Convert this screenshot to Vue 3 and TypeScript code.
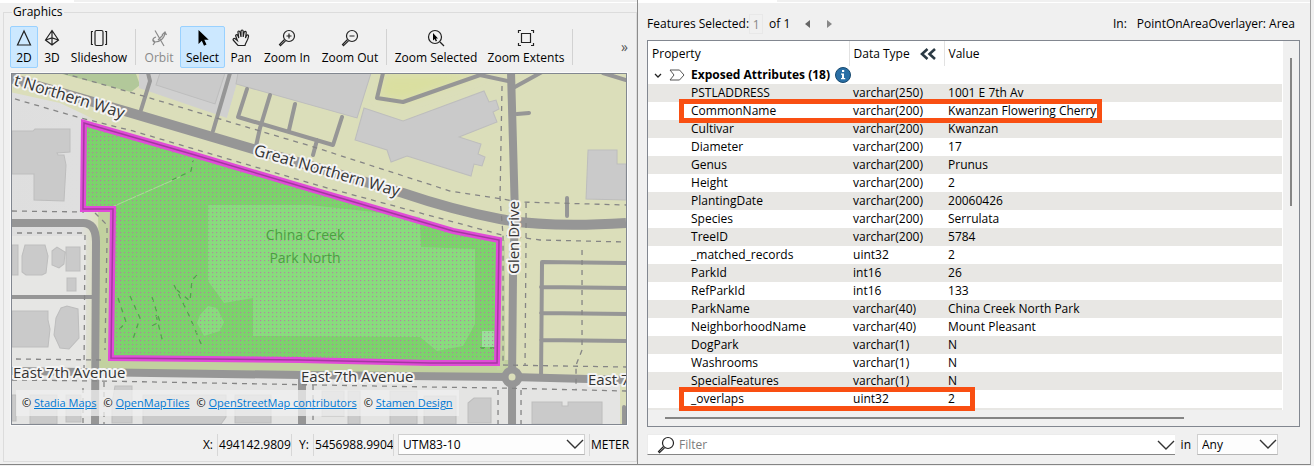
<script setup lang="ts">
import { ref } from 'vue'

interface Attribute {
  name: string
  type: string
  value: string
  mark?: string
}

const attributes: Attribute[] = [
  { name: 'PSTLADDRESS', type: 'varchar(250)', value: '1001 E 7th Av' },
  { name: 'CommonName', type: 'varchar(200)', value: 'Kwanzan Flowering Cherry', mark: 'wide' },
  { name: 'Cultivar', type: 'varchar(200)', value: 'Kwanzan' },
  { name: 'Diameter', type: 'varchar(200)', value: '17' },
  { name: 'Genus', type: 'varchar(200)', value: 'Prunus' },
  { name: 'Height', type: 'varchar(200)', value: '2' },
  { name: 'PlantingDate', type: 'varchar(200)', value: '20060426' },
  { name: 'Species', type: 'varchar(200)', value: 'Serrulata' },
  { name: 'TreeID', type: 'varchar(200)', value: '5784' },
  { name: '_matched_records', type: 'uint32', value: '2' },
  { name: 'ParkId', type: 'int16', value: '26' },
  { name: 'RefParkId', type: 'int16', value: '133' },
  { name: 'ParkName', type: 'varchar(40)', value: 'China Creek North Park' },
  { name: 'NeighborhoodName', type: 'varchar(40)', value: 'Mount Pleasant' },
  { name: 'DogPark', type: 'varchar(1)', value: 'N' },
  { name: 'Washrooms', type: 'varchar(1)', value: 'N' },
  { name: 'SpecialFeatures', type: 'varchar(1)', value: 'N' },
  { name: '_overlaps', type: 'uint32', value: '2', mark: 'narrow' },
]

const mode = ref('2D')
const tool = ref('Select')
const filter = ref('')
const page = ref('1')
</script>

<template>
  <main class="app">
    <section class="pane graphics">
      <div class="strip"><span class="tab tab-left"></span></div>
      <fieldset class="group">
        <legend>Graphics</legend>
        <div class="toolbar" role="toolbar" aria-label="Graphics">
          <button class="tool w28" :class="{ on: mode === '2D' }" @click="mode = '2D'">
            <svg viewBox="0 0 18 18"><path d="M9 2 2.500 16h13z" /></svg>2D
          </button>
          <button class="tool w28" :class="{ on: mode === '3D' }" @click="mode = '3D'">
            <svg viewBox="0 0 18 18"><path d="M9 1.500 2.500 11 9 16l6.500-5zM9 1.500V16M2.500 11 9 9l6.500 2" /></svg>3D
          </button>
          <button class="tool w66">
            <svg viewBox="0 0 18 18"><rect x="5" y="1.500" width="8" height="15" rx="1.500" /><path d="M3 2.500H1.500v13H3M15 2.500h1.500v13H15" /></svg>Slideshow
          </button>
          <i class="sep"></i>
          <button class="tool w42" disabled>
            <svg viewBox="0 0 18 18"><path d="M5 1.500 14 17M15 3C15 9 10 13 5 13 2 13 2 9 6 8M2.500 10.500 5 13l-2 3M12 6l3-3 1.500 3M8 11l5-5" /></svg>Orbit
          </button>
          <button class="tool w45" :class="{ on: tool === 'Select' }" @click="tool = 'Select'">
            <svg viewBox="0 0 18 18"><path d="M4.500 1v14l3.300-3.300 2.200 5 2.500-1.200-2.200-4.700h4.400z" fill="#000" stroke="none" /></svg>Select
          </button>
          <button class="tool w32" :class="{ on: tool === 'Pan' }" @click="tool = 'Pan'">
            <svg viewBox="0 0 18 18"><path d="M6 16.500h7c.5-3 3-5 3.500-9 .2-2-1.700-2-2.200-.4L13.500 9l.7-5c.2-2-1.800-2.200-2.200-.3l-.8 4.300V2.500c0-2-2.200-2-2.200 0V8L8 3.200c-.4-1.800-2.400-1.500-2 .5L6.800 9l-1-2.500c-.7-1.500-2.600-.8-2 .8l1.500 4.200-2.100-1.700c-1.500-1-2.800.4-1.600 1.700z" /></svg>Pan
          </button>
          <button class="tool w60">
            <svg viewBox="0 0 18 18"><circle cx="11" cy="7" r="5.500" /><path d="M6.500 10.500 1.500 15.500l1 1.200 5-4.800M8.500 7h5M11 4.500v5" /></svg>Zoom In
          </button>
          <button class="tool w66">
            <svg viewBox="0 0 18 18"><circle cx="11" cy="7" r="5.500" /><path d="M6.500 10.500 1.500 15.500l1 1.200 5-4.800M8.500 7h5" /></svg>Zoom Out
          </button>
          <i class="sep"></i>
          <button class="tool w94">
            <svg viewBox="0 0 18 18"><circle cx="8" cy="8" r="6.500" /><path d="m13 13 4 4" /><path d="M6 4v7.500l1.700-1.500 1.100 2.400 1.200-.6L8.900 9.500H11z" fill="#111" stroke="none" /></svg>Zoom Selected
          </button>
          <button class="tool w86">
            <svg viewBox="0 0 18 18"><path d="M4.500 4.500h9v9h-9zM1.500 4V1.500H4M14 1.500h2.500V4M16.500 14v2.500H14M4 16.500H1.500V14" /></svg>Zoom Extents
          </button>
          <i class="sep"></i>
          <button class="more" aria-label="More tools">»</button>
        </div>

        <div class="map-frame">
          <svg class="map" viewBox="12 74 614 350" preserveAspectRatio="xMidYMid slice" role="img" aria-label="Map of China Creek Park North">
            <defs>
              <pattern id="dots" width="4" height="4" patternUnits="userSpaceOnUse"><rect width="1" height="1" fill="#b878a4" /></pattern>
              <linearGradient id="fade" x1="0" x2="1"><stop offset="0" stop-color="#dedede" /><stop offset=".8" stop-color="#dfdfdf" /><stop offset="1" stop-color="#dcdfba" /></linearGradient>
              <filter id="soft" x="-20%" y="-20%" width="140%" height="140%"><feGaussianBlur stdDeviation="5" /></filter>
            </defs>
            <rect x="12" y="74" width="614" height="350" fill="#dbdeba" />
            <path d="M0 90 60 103 100 122 97 376H0z" fill="url(#fade)" />
            <path d="M0 372 620 382V424H0z" fill="#e4e4e3" />
            <path d="M12 236h74v134H12z" fill="#e6e6e4" />
            <path d="M62 74h74l4 11-9 7z" fill="#b2c89a" />
            <path d="M98 205h16v155h400v13H100z" fill="#c2d19f" />
            <path d="M497 240h8v130h-8z" fill="#c5d3a4" />
            <path d="M384 74 379 97l24 4 78-27z" fill="#dadfa0" filter="url(#soft)" />
            <path d="M139 73v15l88 30 10-35 120 35 14-45z" fill="#d0d0d0" />
            <path d="M237 84 227 118 238 120 252 125 350 150 358 119z" fill="#dbdeba" />
            <g class="building">
              <path d="M160 73 156 85l59 19 10-31zM238 73l-2 11 121 34 14-45z" />
              <path d="M364 108 403 121 484 91l5 11 7-2 3 9-6 3 4 10-38 15 22 7-3 10 7 3-3 9-8-2-3 12-64-20-16 6-4-12-32-10z" />
              <path d="M588 150h29v14h9v36l-40-1z" />
              <path d="M12 131h21l2-2h35v23l-13 1 1 2h6l2 10-2 36-30-1v-26H12z" />
              <path d="M12 245h6v30h-6zM25 245h20l3 11-2 17-4 2H26l-4-3V256zM52 251l5-4 8 5-1 12-5 4-7-3zM66 247h14v24H66zM67 278h9v13h-9z" />
              <path d="M12 311h36v9l2 9-2 18H12zM56 318l5-10 6-2 11 3 1 29-10 11-9-1-6-13z" />
              <path d="M12 395h4v26h-4zM30 395h27v29H30zM66 395h15v27H66zM115 386h17v37h-20v-20zM143 395h83v22l-5 7h-78zM235 395h36v28h-36zM322 391h22v25h-22zM348 391h12v33h-12zM390 391h27v33h-27zM424 396h32v28h-32zM468 403l6-5h17v25h-23zM532 402h30v4h6v-4h34v22h-70z" />
            </g>
            <g class="road thin">
              <path d="M148 73l2 8-9 29M230 73l-17 58M247 89l-9 28 95 28 9-28M270 95l-10 33-4 18M295 104l-6 26M317 140l-4 15" />
              <path d="M383 73l-6 25 26 4 77-27 32 7M542 72l-29 16M517 114l12-1M567 198v18M603 73l23 7" />
              <path d="M626 263l-84-1-1 115M541 287l85 1M541 313l85 1M541 340l85 1M12 297h80M624 407v17" />
            </g>
            <g class="road">
              <path class="wide" d="M0 75 128 112 253 149 403 193Q453 210 500 219T626 223" />
              <path d="M511 73 515 216 513 273 512 377V424M12 223h71q13 0 13 19l-1 182M12 371l288 4 212 2 114 3M302 377v47" />
            </g>
            <circle cx="512" cy="377" r="7" fill="#dbdeba" stroke="#969696" stroke-width="7" />
            <g class="path">
              <path d="M63 73 143 96 233 123 307 145 323 150 450 191 502 199 520 202 626 205M15 99l62 18 56 14 187 55 182 49 38 5 86 2" />
              <path d="M502 86 500 198l3 37v130M526 203v37l-1 125M498 390v34M521 390v34M582 250v100l-6 15v25" />
              <path d="M503 365l123 2M12 380l88 1 330 6 70 1 126 3M12 211l72 1M17 233h68l-1 140M16 359l87 1M95 213l12 12v15l-2 110M104 382v42M83 388v36M313 385v39" />
            </g>
            <path class="park" d="M84 123 195 155 320 192 453 231 499 240 497 363 430 363 300 360 111 358 113 209H83z" />
            <path d="M208 205h102l110 12 1 30 54 2v75l-12 22-26 5-17-14-167-1v-38l-29 5-16-22zM200 315l8-9 9 2 7 14-4 9-16 5-7-13z" fill="#8fe187" opacity=".65" />
            <path d="M482 331h12v16h-12z" fill="#9ae09a" />
            <path d="M112 207l68-30" fill="none" stroke="#a4df91" />
            <path class="trail" d="M172 180l19-9 2-11M118 298l8 24-9 10M130 296l10 22-8 24M152 297l8 25-9 4M156 315l7 28M174 285l14 28 14 33M177 290l13 11 2-21 5-5M480 348h16" />
            <path d="M84 123 195 155 320 192 453 231 499 240 497 363 430 363 300 360 111 358 113 209H83z" fill="url(#dots)" />
            <path d="M84 123 195 155 320 192 453 231 499 240 497 363 430 363 300 360 111 358 113 209H83z" class="edge" />
            <path d="M84 123 195 155 320 192 453 231 499 240 497 363 430 363 300 360 111 358 113 209H83z" class="edge-core" />
            <g class="label">
              <text transform="translate(13 85) rotate(17)">t Northern Way</text>
              <text transform="translate(253 155) rotate(16)">Great Northern Way</text>
              <text class="small" transform="translate(519 274) rotate(-90)">Glen Drive</text>
              <text class="small" x="13" y="378">East 7th Avenue</text>
              <text class="small" x="301" y="382">East 7th Avenue</text>
              <text class="small" x="588" y="385">East 7</text>
            </g>
            <g class="park-label"><text x="305" y="240">China Creek</text><text x="305" y="263">Park North</text></g>
          </svg>
          <div class="credit">
            <span>© <a href="#">Stadia Maps</a></span>
            <span>© <a href="#">OpenMapTiles</a></span>
            <span>© <a href="#">OpenStreetMap contributors</a></span>
            <span>© <a href="#">Stamen Design</a></span>
          </div>
        </div>

        <div class="status">
          <span class="cell">X:</span>
          <span class="cell num-x">494142.9809</span>
          <span class="cell axis">Y:</span>
          <span class="cell num-y">5456988.9904</span>
          <span class="cell system">
            <span class="combo">
              <select aria-label="Coordinate system"><option>UTM83-10</option></select>
              <svg class="chev" viewBox="0 0 18 10"><path d="m1 1 8 8 8-8" /></svg>
            </span>
          </span>
          <span class="cell unit">METER</span>
        </div>
      </fieldset>
    </section>

    <section class="pane info">
      <div class="strip"><span class="tab tab-right"></span></div>
      <header class="selection">
        <label for="page">Features Selected:</label>
        <input id="page" v-model="page" class="page" disabled />
        <span>of 1</span>
        <button class="step" aria-label="Previous"><svg viewBox="0 0 5 8"><path d="M5 0v8L0 4z" fill="#666" /></svg></button>
        <button class="step" aria-label="Next"><svg viewBox="0 0 5 8"><path d="M0 0v8l5-4z" fill="#888" /></svg></button>
        <span class="source"><span>In:</span><span>PointOnAreaOverlayer: Area</span></span>
      </header>

      <div class="grid-box">
        <div class="grid-view">
          <table>
            <colgroup><col class="c-name" /><col class="c-type" /><col /></colgroup>
            <thead>
              <tr>
                <th>Property</th>
                <th><span class="type-head">Data Type <button class="fold" aria-label="Hide data type"><svg viewBox="0 0 16 12"><path d="M7.500 1 2 6l5.500 5M15 1 9.500 6l5.500 5" /></svg></button></span></th>
                <th>Value</th>
              </tr>
            </thead>
            <tbody>
              <tr class="section">
                <th colspan="3">
                  <span class="section-head">
                    <svg class="open" viewBox="0 0 8 5"><path d="m1 1 3 3 3-3" /></svg>
                    <svg class="kind" viewBox="0 0 16 12"><path d="M1 1h9.500l4.500 5-4.500 5H1l4-5z" /></svg>
                    Exposed Attributes (18)
                    <svg class="about" viewBox="0 0 16 16"><circle cx="8" cy="8" r="7.500" fill="#2a6fa5" stroke="#17496f" /><path d="M7 3h2.200v2H7zM6 6.500h3V11h1.200v1.300H6V11h1V7.800H6z" fill="#fff" /></svg>
                  </span>
                </th>
              </tr>
              <tr v-for="a in attributes" :key="a.name" class="row">
                <td>{{ a.name }}<span v-if="a.mark" class="mark" :class="a.mark"></span></td>
                <td>{{ a.type }}</td>
                <td>{{ a.value }}</td>
              </tr>
            </tbody>
          </table>
          <div class="next-row"></div>
        </div>
        <div class="vbar"><i></i></div>
        <div class="hbar"><i></i></div>
      </div>

      <footer class="filter">
        <span class="search">
          <svg class="lens" viewBox="0 0 18 18"><circle cx="11" cy="7" r="5.500" /><path d="M6.500 10.500 1.500 15.500l1 1.200 5-4.800" /></svg>
          <input v-model="filter" placeholder="Filter" aria-label="Filter" />
          <svg class="chev" viewBox="0 0 18 10"><path d="m1 1 8 8 8-8" /></svg>
        </span>
        <label for="scope">in</label>
        <span class="combo any">
          <select id="scope"><option>Any</option></select>
          <svg class="chev" viewBox="0 0 18 10"><path d="m1 1 8 8 8-8" /></svg>
        </span>
      </footer>
    </section>
    <div class="edge-gap"></div>
  </main>
</template>

<style>
html,
body,
#app {
  height: 100%;
}
body {
  margin: 0;
}
</style>

<style scoped>
* {
  box-sizing: border-box;
}
.app {
  display: flex;
  min-height: 100%;
  background: #f0f0f0;
  color: #000;
  font: 12px/18px 'Segoe UI', 'Open Sans', 'Noto Sans', sans-serif;
}
button,
input,
select {
  font: inherit;
  color: inherit;
  border: 0;
  padding: 0;
  margin: 0;
  background: none;
}
.pane {
  display: flex;
  flex-direction: column;
  border-bottom: 1px solid #848484;
  margin-bottom: 1px;
  min-width: 0;
}
.graphics {
  flex: 638 1 0;
  border-right: 1px solid #8c8c8c;
}
.info {
  flex: 673 1 0;
  border-right: 1px solid #a0a0a0;
}
.edge-gap {
  width: 3px;
}
.strip {
  height: 3px;
  border-bottom: 1px solid #fff;
  flex: none;
}
.tab {
  display: block;
  height: 2px;
  background: #fff;
}
.tab-left {
  width: 74px;
}
.tab-right {
  width: 139px;
}
.group {
  flex: 1;
  display: flex;
  flex-direction: column;
  min-width: 0;
  margin: 0 0 2px 3px;
  padding: 5px 8px 5px 6px;
  border: 1px solid #dcdcdc;
}
legend {
  padding: 0 1px;
  margin-left: 2px;
}
.toolbar {
  display: flex;
  height: 42px;
}
.tool {
  flex: none;
  display: flex;
  flex-direction: column;
  align-items: center;
  padding-top: 2px;
  border: 1px solid transparent;
  border-radius: 2px;
  white-space: nowrap;
}
.tool svg {
  width: 18px;
  height: 18px;
  margin-bottom: 2px;
}
svg {
  display: block;
  flex: none;
}
.tool path,
.tool rect,
.tool circle,
.lens path,
.lens circle {
  fill: none;
  stroke: #222;
  stroke-width: 1.2;
}
.tool path[fill] {
  fill: #000;
  stroke: none;
}
.tool:disabled {
  color: #8a8a8a;
}
.tool:disabled path {
  stroke: #8a8a8a;
}
.on {
  background: #cce8ff;
  border-color: #99d1ff;
}
.w28 { width: 28px; }
.w32 { width: 32px; }
.w42 { width: 42px; }
.w45 { width: 45px; }
.w60 { width: 60px; }
.w66 { width: 66px; }
.w86 { width: 86px; }
.w94 { width: 94px; }
.sep {
  width: 1px;
  margin: 3px 2px 3px 3px;
  background: #d2d2d2;
}
.more {
  margin-left: auto;
  font-size: 14px;
  color: #555;
}
.map-frame {
  position: relative;
  flex: 1;
  min-height: 352px;
  margin: 5px 1px 6px;
  border: 1px solid #828790;
  outline: 1px solid #fafafa;
}
.map {
  position: absolute;
  width: 100%;
  height: 100%;
  font-family: 'Open Sans', 'Noto Sans', sans-serif;
}
.building path {
  fill: #cacaca;
  stroke: #bdbdbd;
  stroke-width: 1;
}
.road path {
  fill: none;
  stroke: #969696;
  stroke-width: 8;
  stroke-linejoin: round;
}
.road .wide {
  stroke-width: 10;
}
.thin path {
  stroke-width: 4;
  stroke-linecap: round;
}
.path path,
.trail {
  fill: none;
  stroke: #858585;
  stroke-width: 1.3;
  stroke-dasharray: 5 5;
}
.trail {
  stroke: #4fa649;
}
.park {
  fill: #7bd36b;
}
.edge {
  fill: none;
  stroke: #e04bd8;
  stroke-width: 6;
}
.edge-core {
  fill: none;
  stroke: #a33a9f;
  stroke-width: 1.5;
}
.label text {
  font-size: 16px;
  fill: #333;
  stroke: #f4f4f4;
  stroke-width: 4;
  stroke-linejoin: round;
  paint-order: stroke;
}
.label .small {
  font-size: 15px;
}
.park-label text {
  font-size: 14px;
  text-anchor: middle;
  fill: #4c9f42;
}
.credit {
  position: absolute;
  left: 4px;
  bottom: 8px;
  display: flex;
  gap: 7px;
  padding: 4px 6px;
  font-size: 11px;
  background: rgba(240, 240, 240, 0.75);
  white-space: nowrap;
}
.credit a {
  color: #0078d4;
}
.status {
  display: flex;
  justify-content: flex-end;
  align-items: center;
  height: 22px;
  margin: 3px -2px 0 0;
}
.cell {
  height: 22px;
  line-height: 22px;
  padding: 0 4px;
  border-left: 1px solid #d7d7d7;
  white-space: nowrap;
}
.cell:first-child {
  border-left: 0;
}
.num-x {
  width: 74px;
  padding: 0 1px;
}
.axis {
  width: 22px;
  padding-left: 7px;
}
.num-y {
  width: 80px;
  padding: 0 1px;
}
.system {
  width: 196px;
}
.unit {
  width: 41px;
  padding: 0 1px;
}
.combo {
  position: relative;
  display: block;
}
.combo select {
  display: block;
  appearance: none;
  width: 100%;
  height: 21px;
  padding-left: 4px;
  line-height: 18px;
  background: #fdfdfd;
  border: 1px solid #d0d0d0;
  border-bottom-color: #b5b5b5;
}
.chev {
  width: 18px;
  height: 10px;
  fill: none;
  stroke: #333;
  stroke-width: 1.4;
}
.combo .chev {
  position: absolute;
  right: 1px;
  top: 5px;
  pointer-events: none;
}
.info {
  padding: 0 0 9px;
}
.selection {
  display: flex;
  align-items: center;
  height: 37px;
  padding: 5px 15px 0 9px;
}
.page {
  width: 14px;
  height: 20px;
  margin: 0 6px 0 0;
  text-align: center;
  color: #888;
  border: 1px solid #e8e8e8;
}
.step {
  width: 22px;
  display: grid;
  place-items: center;
}
.step svg {
  width: 5px;
  height: 8px;
}
.selection span + .step {
  margin-left: 6px;
}
.source {
  display: flex;
  gap: 10px;
  margin-left: auto;
}
.grid-box {
  flex: 1;
  display: grid;
  grid-template: 1fr 16px / 1fr 16px;
  margin: 0 10px 0 9px;
  border: 1px solid #828790;
}
.grid-view {
  background: #fff;
  border-right: 1px solid #fff;
}
table {
  width: 100%;
  table-layout: fixed;
  border-collapse: collapse;
}
.c-name { width: 201px; }
.c-type { width: 95px; }
th,
td {
  padding: 0;
  text-align: left;
  font-weight: 400;
  white-space: nowrap;
}
thead th {
  height: 25px;
  padding-left: 4px;
  border-left: 1px solid #e2e2e2;
}
thead th:first-child {
  border-left: 0;
}
.type-head,
.section-head {
  display: flex;
  align-items: center;
}
.fold {
  margin: 0 8px 0 auto;
}
.fold svg {
  width: 16px;
  height: 12px;
  fill: none;
  stroke: #2b3a44;
  stroke-width: 2.6;
}
.section th {
  height: 18px;
  font-weight: 700;
}
.section-head {
  height: 18px;
  padding-left: 6px;
}
.open {
  width: 8px;
  height: 5px;
  fill: none;
  stroke: #222;
  stroke-width: 1.3;
}
.kind {
  width: 16px;
  height: 12px;
  margin: 0 6px 0 7px;
  fill: none;
  stroke: #555;
}
.about {
  width: 16px;
  height: 16px;
  margin-left: 5px;
}
.row td {
  position: relative;
  height: 18px;
  padding-left: 4px;
}
.row td:first-child {
  padding-left: 43px;
}
.row:nth-child(even) td {
  background: #e8e7e4;
}
.mark {
  position: absolute;
  z-index: 1;
  top: -3px;
  left: 31px;
  height: 24px;
  border: 5px solid #f94f12;
}
.wide { width: 423px; }
.narrow { width: 296px; }
.next-row {
  height: 2px;
  background: #e8e7e4;
}
.vbar {
  display: flex;
  justify-content: center;
  padding-top: 17px;
}
.vbar i {
  width: 2px;
  height: 42%;
  background: #858585;
}
.hbar {
  display: flex;
  align-items: center;
  padding-left: 17px;
}
.hbar i {
  width: 84%;
  height: 2px;
  background: #858585;
}
.filter {
  display: flex;
  align-items: center;
  gap: 6px;
  margin: 7px 32px 0 9px;
}
.search {
  flex: 1;
  display: flex;
  align-items: center;
  height: 21px;
  padding: 0 0 0 9px;
  background: #fff;
  border: 1px solid #ececec;
  border-right: 0;
  border-bottom-color: #858585;
}
.search input {
  flex: 1;
  margin-left: 4px;
  outline: 0;
}
.search input::placeholder {
  color: #7c7c7c;
  opacity: 1;
}
.lens {
  width: 18px;
  height: 18px;
}
.any {
  width: 81px;
}
</style>
